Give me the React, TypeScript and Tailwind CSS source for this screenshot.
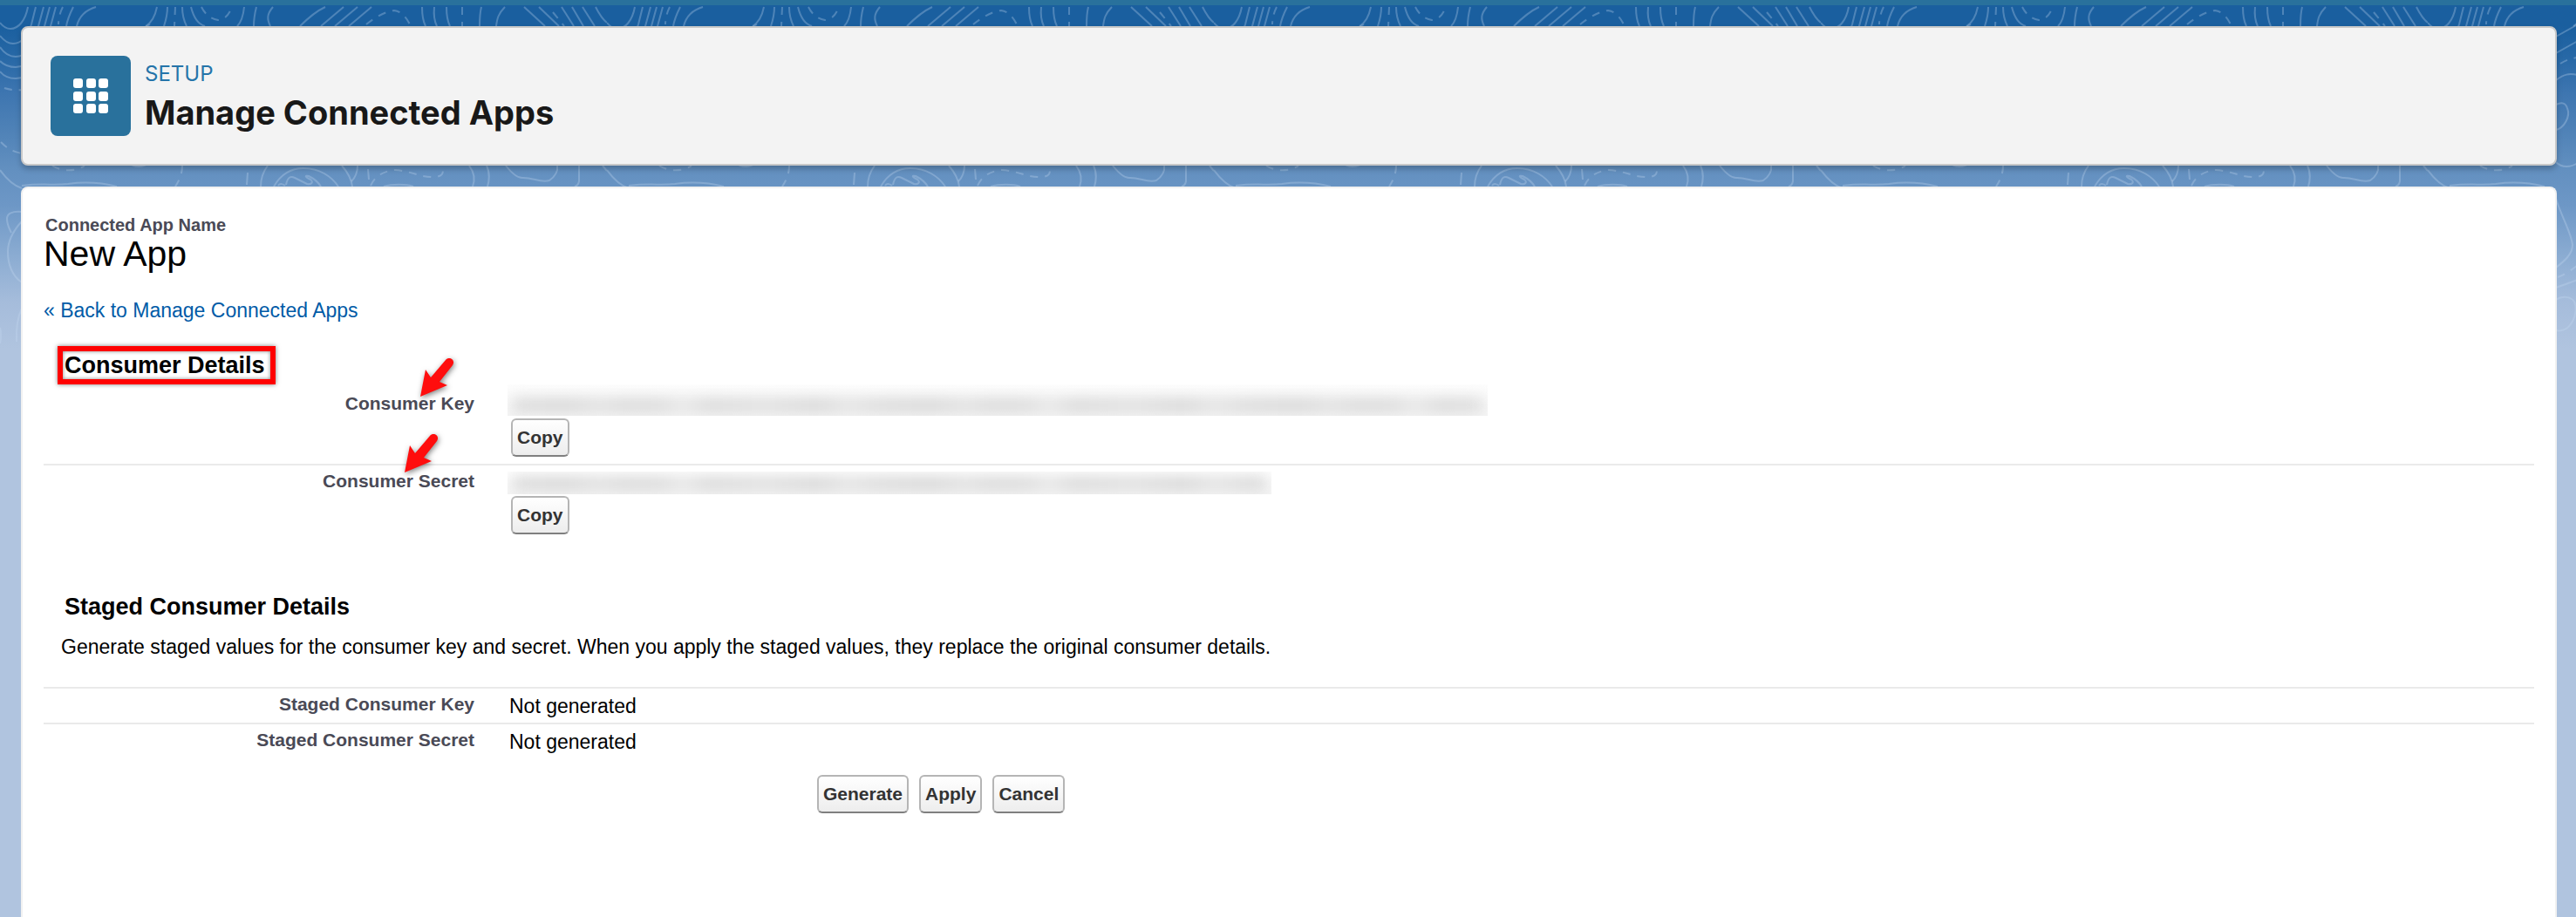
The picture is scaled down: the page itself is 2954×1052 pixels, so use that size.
import React from "react";

const SOLID_CONTOURS = [
  "M32 8C29 24 21 33 12 33C6 33 3 30 0 26",
  "M41 8L36 28C31 43 24 50 15 50C9 50 4 46 0 41",
  "M50 8L44 30C38 56 28 65 18 65C10 65 4 60 0 54",
  "M57 8L51 30C44 66 32 77 18 77C10 77 4 74 0 70",
  "M64 8L58 30C50 80 36 90 18 90C10 90 4 87 0 82",
  "M84 8C80 16 77 24 76 30",
  "M110 8C96 12 90 22 88 30",
  "M180 8C178 18 174 26 167 30",
  "M192 8C192 16 190 24 188 30",
  "M209 8C209 16 211 24 214 30",
  "M219 8C222 20 228 28 235 30",
  "M280 8C279 18 276 26 272 30",
  "M294 8C292 16 291 24 291 30",
  "M313 8C306 16 306 22 310 30",
  "M373 8C360 14 350 24 344 30",
  "M394 8L368 30",
  "M410 8L384 30",
  "M426 8L400 30",
  "M484 8C484 18 486 26 488 30",
  "M498 8C497 18 499 26 501 30",
  "M512 8C512 18 514 26 516 30",
  "M552 8C550 16 550 24 550 30",
  "M579 8C571 16 570 22 569 30",
  "M601 8L625 30",
  "M618 8L641 30",
  "M644 8L658 30",
  "M656 8L669 30",
  "M668 8L682 30",
  "M683 8C687 16 691 22 696 26",
  "M691 190L696 196",
  "M0 195C8 206 16 213 25 216",
  "M25 213C50 210 60 213 78 211C100 208 118 210 134 214",
  "M284 198L283 212",
  "M307 190C301 198 299 206 299 214",
  "M392 190C399 198 403 206 404 214",
  "M314 214C322 200 334 193 348 193C366 193 380 202 388 214",
  "M319 213C321 210 325 211 327 213M328 212C330 202 334 202 338 204L352 211C357 212 360 209 356 206C350 203 349 201 354 202C360 205 365 209 368 214",
  "M410 190C410 198 407 204 403 208",
  "M422 194L423 206",
  "M440 214C450 211 466 211 474 214",
  "M538 190C544 198 545 206 542 214",
  "M558 190C562 198 561 208 559 214",
  "M580 190C588 200 594 205 600 204C612 204 620 210 630 207C637 202 640 196 639 190",
  "M664 190L664 208Q663 213 659 214",
  "M25 243C14 242 8 245 8 251C8 258 11 263 13 267",
  "M25 254C12 268 9 281 9 289C9 303 14 317 25 324",
  "M25 354Q18 368 19 392",
  "M0 376Q2 384 0 394",
  "M147 42L172 28",
  "M147 61L172 47",
  "M147 92C156 85 162 84 172 86",
  "M147 120C154 117 158 118 160 124C164 134 156 147 147 149",
  "M147 186C154 193 164 192 172 187",
  "M147 228C154 250 165 268 166 281C166 292 156 300 147 307",
  "M147 330L172 321",
  "M147 344C154 339 164 340 168 346C174 358 164 383 147 379",
];

const DASHED_CONTOURS = [
  "M72 8Q67 18 67 28",
  "M5 101Q14 104 26 103",
  "M201 8L200 30",
  "M231 8C236 18 243 22 250 23C258 23 263 16 266 8",
  "M420 28C430 20 442 13 452 12C460 13 466 20 470 28",
  "M530 8L530 30",
  "M634 14L647 30",
  "M60 190C70 197 88 197 97 190",
  "M209 190C209 200 205 208 201 214",
  "M425 213C430 202 440 196 453 195C470 196 482 203 494 203C506 204 511 199 506 190",
  "M1 163C8 170 14 174 25 176",
  "M152 73C158 69 164 67 172 66",
  "M149 318Q160 314 172 304",
];

function TopographicBackground() {
  return (
    <div
      aria-hidden="true"
      className="absolute inset-0 -z-10 overflow-hidden bg-[linear-gradient(to_bottom,#1a5f9f_30px,#2768a6_65px,#3d75b0_105px,#4f82b7_150px,#6390c0_195px,#6d97c6_235px,#8eaed3_300px,#a5bcdb_345px,#b0c4df_400px)]"
    >
      <svg width="100%" height="460">
        <defs>
          <pattern id="contours" width="696" height="460" patternUnits="userSpaceOnUse">
            <g fill="none" stroke="#c9dcf2" strokeOpacity="0.3" strokeWidth="2">
              {SOLID_CONTOURS.map((d) => (
                <path key={d} d={d} />
              ))}
              <g strokeDasharray="9 8">
                {DASHED_CONTOURS.map((d) => (
                  <path key={d} d={d} />
                ))}
              </g>
            </g>
          </pattern>
        </defs>
        <rect width="100%" height="460" fill="url(#contours)" />
      </svg>
    </div>
  );
}

function AppGridIcon() {
  return (
    <svg width="92" height="92" viewBox="0 0 92 92" aria-hidden="true" className="shrink-0">
      <rect width="92" height="92" rx="8" fill="#29719c" />
      {[26, 41, 55].map((y) =>
        [26, 41, 55].map((x) => (
          <rect key={`${x}-${y}`} x={x} y={y} width="11" height="11" rx="3" fill="#fff" />
        )),
      )}
    </svg>
  );
}

function ArrowMark({ className }: { className: string }) {
  return (
    <svg
      width="50"
      height="56"
      viewBox="0 0 50 56"
      aria-hidden="true"
      className={`absolute drop-shadow-[1px_2px_3px_rgba(0,0,0,0.5)] ${className}`}
    >
      <path d="M4 51L10 20L16 29L33 9C37 4 45 9 41 15L26 34L35 38Z" fill="#ff0d0d" />
    </svg>
  );
}

function PanelButton({ children }: { children: React.ReactNode }) {
  return (
    <button
      type="button"
      className="h-11 rounded-md border-2 border-[#b5b5b5] border-b-[#7f7f7f] bg-linear-to-b from-white to-[#ededed] px-[5px] text-[21px] leading-6 font-bold text-[#333]"
    >
      {children}
    </button>
  );
}

function Redacted({ label, className }: { label: string; className: string }) {
  return (
    <div
      role="img"
      aria-label={label}
      className={`flex items-end overflow-hidden bg-linear-to-b from-[#fdfdfd] to-[#f5f5f5] ${className}`}
    >
      <div className="mx-1.5 mb-1 h-4 w-full bg-[repeating-linear-gradient(90deg,#dadada_0px,#d6d6d6_60px,#dfdfdf_100px,#d8d8d8_130px,#dadada_170px,#e6e6e6_195px,#d8d8d8_225px,#dedede_290px,#d6d6d6_350px,#e2e2e2_385px,#dadada_420px)] blur-[8px]" />
    </div>
  );
}

const labelCell = "w-[494px] text-right align-top text-[21px] leading-6 font-bold text-[#4a4a56]";

export default function App() {
  return (
    <div className="relative isolate flex min-h-screen flex-col overflow-hidden pr-[22px] pl-6 font-['Liberation_Sans',Arial,sans-serif] text-[23px] leading-7 text-black">
      <TopographicBackground />
      <div className="-mr-[22px] -ml-6 h-1.5 bg-[#29719c]" />

      <header className="mt-6 flex h-40 items-center gap-4 rounded-lg border-2 border-[#c9c9c9] bg-[#f3f3f3] px-8 shadow-[0_4px_6px_rgba(0,0,0,0.22)]">
        <AppGridIcon />
        <div className="pt-1.5 font-['Inter',sans-serif]">
          <p className="text-2xl leading-8 text-[#2574a9]">SETUP</p>
          <h1 className="text-[38px] leading-[56px] font-bold text-[#181818]">Manage Connected Apps</h1>
        </div>
      </header>

      <main className="mt-6 flex-1 rounded-t-lg border-2 border-b-0 border-[#f1f1f1] bg-white px-6 pt-[30px] pb-16">
        <p className="pl-0.5 text-[20px] leading-6 font-bold text-[#4a4a56]">Connected App Name</p>
        <h2 className="text-[41px] leading-[42px]">New App</h2>
        <a href="#connected-apps" className="mt-[30px] block w-fit text-[#015ba7]">
          « Back to Manage Connected Apps
        </a>

        <section>
          <h3 className="mt-[27px] ml-4 w-[250px] border-[6px] border-[#ff0000] px-0.5 text-[27px] leading-8 font-bold shadow-[0_0_5px_rgba(0,0,0,0.5),inset_0_0_4px_rgba(0,0,0,0.5)]">
            Consumer Details
          </h3>
          <table className="w-full">
            <tbody>
              <tr className="border-b-2 border-[#eaeaea]">
                <th scope="row" className={`${labelCell} pt-2.5`}>
                  <span className="relative">
                    Consumer Key
                    <ArrowMark className="right-4 bottom-3.5" />
                  </span>
                </th>
                <td className="pb-2 pl-[38px]">
                  <Redacted label="Consumer key hidden" className="mb-[3px] h-9 w-[1124px]" />
                  <div className="pl-1">
                    <PanelButton>Copy</PanelButton>
                  </div>
                </td>
              </tr>
              <tr>
                <th scope="row" className={`${labelCell} pt-1.5`}>
                  <span className="relative">
                    Consumer Secret
                    <ArrowMark className="right-[34px] bottom-4" />
                  </span>
                </th>
                <td className="pt-[7px] pl-[38px]">
                  <Redacted label="Consumer secret hidden" className="mb-0.5 h-[26px] w-[876px]" />
                  <div className="pl-1">
                    <PanelButton>Copy</PanelButton>
                  </div>
                </td>
              </tr>
            </tbody>
          </table>
        </section>

        <section className="mt-[67px]">
          <h3 className="pl-6 text-[27px] leading-8 font-bold">Staged Consumer Details</h3>
          <p className="mt-4 pl-5">
            Generate staged values for the consumer key and secret. When you apply the staged values, they replace the
            original consumer details.
          </p>
          <table className="mt-8 w-full">
            <tbody>
              <tr className="border-y-2 border-[#eaeaea]">
                <th scope="row" className={`${labelCell} pt-1.5`}>
                  Staged Consumer Key
                </th>
                <td className="pt-1.5 pb-[5px] pl-10">Not generated</td>
              </tr>
              <tr>
                <th scope="row" className={`${labelCell} pt-1.5`}>
                  Staged Consumer Secret
                </th>
                <td className="pt-1.5 pl-10">Not generated</td>
              </tr>
            </tbody>
          </table>
        </section>

        <div className="mt-6 flex gap-3 pl-[887px]">
          <PanelButton>Generate</PanelButton>
          <PanelButton>Apply</PanelButton>
          <PanelButton>Cancel</PanelButton>
        </div>
      </main>
    </div>
  );
}
